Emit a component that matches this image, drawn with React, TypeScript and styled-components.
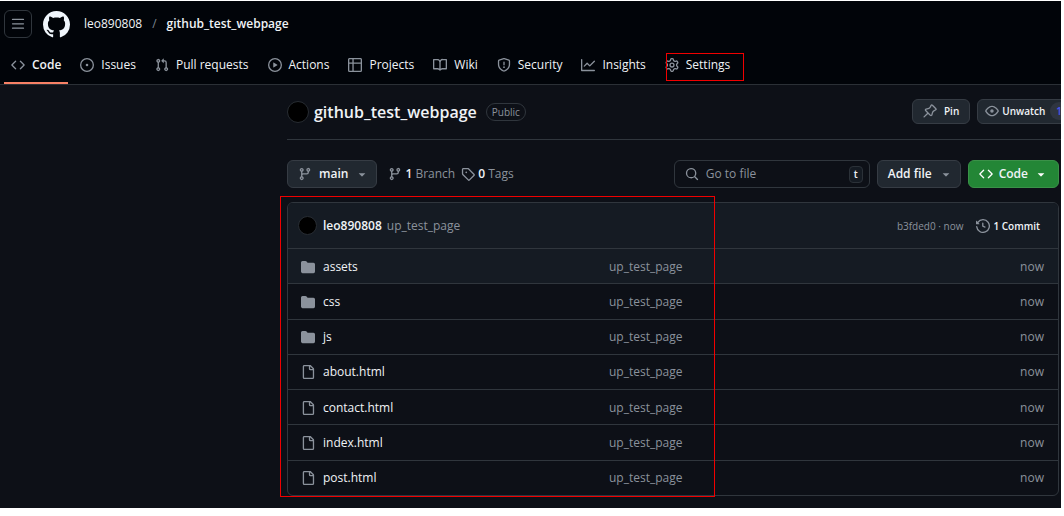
import React from "react";
import styled, { createGlobalStyle, css } from "styled-components";

const PATHS = {
  code: "m11.28 3.22 4.25 4.25a.75.75 0 0 1 0 1.06l-4.25 4.25a.749.749 0 0 1-1.275-.326.749.749 0 0 1 .215-.734L13.94 8l-3.72-3.72a.749.749 0 0 1 .326-1.275.749.749 0 0 1 .734.215Zm-6.56 0a.751.751 0 0 1 1.042.018.751.751 0 0 1 .018 1.042L2.06 8l3.72 3.72a.749.749 0 0 1-.326 1.275.749.749 0 0 1-.734-.215L.47 8.53a.75.75 0 0 1 0-1.06Z",
  issue: "M8 9.5a1.5 1.5 0 1 0 0-3 1.5 1.5 0 0 0 0 3ZM8 0a8 8 0 1 1 0 16A8 8 0 0 1 8 0ZM1.5 8a6.5 6.5 0 1 0 13 0 6.5 6.5 0 0 0-13 0Z",
  pull: "M1.5 3.25a2.25 2.25 0 1 1 3 2.122v5.256a2.251 2.251 0 1 1-1.5 0V5.372A2.25 2.25 0 0 1 1.5 3.25Zm5.677-.177L9.573.677A.25.25 0 0 1 10 .854V2.5h1A2.5 2.5 0 0 1 13.5 5v5.628a2.251 2.251 0 1 1-1.5 0V5a1 1 0 0 0-1-1h-1v1.646a.25.25 0 0 1-.427.177L7.177 3.427a.25.25 0 0 1 0-.354ZM3.75 2.5a.75.75 0 1 0 0 1.5.75.75 0 0 0 0-1.5Zm0 9.5a.75.75 0 1 0 0 1.5.75.75 0 0 0 0-1.5Zm8.25.75a.75.75 0 1 0 1.5 0 .75.75 0 0 0-1.5 0Z",
  play: "M8 0a8 8 0 1 1 0 16A8 8 0 0 1 8 0ZM1.5 8a6.5 6.5 0 1 0 13 0 6.5 6.5 0 0 0-13 0Zm4.879-2.773 4.264 2.559a.25.25 0 0 1 0 .428l-4.264 2.559A.25.25 0 0 1 6 10.559V5.442a.25.25 0 0 1 .379-.215Z",
  table: "M0 1.75C0 .784.784 0 1.75 0h12.5C15.216 0 16 .784 16 1.75v12.5A1.75 1.75 0 0 1 14.25 16H1.75A1.75 1.75 0 0 1 0 14.25ZM6.5 6.5v8h7.75a.25.25 0 0 0 .25-.25V6.5Zm8-1.5V1.75a.25.25 0 0 0-.25-.25H6.5V5Zm-13 1.5v7.75c0 .138.112.25.25.25H5v-8ZM5 5V1.5H1.75a.25.25 0 0 0-.25.25V5Z",
  book: "M0 1.75A.75.75 0 0 1 .75 1h4.253c1.227 0 2.317.59 3 1.501A3.743 3.743 0 0 1 11.006 1h4.245a.75.75 0 0 1 .75.75v10.5a.75.75 0 0 1-.75.75h-4.507a2.25 2.25 0 0 0-1.591.659l-.622.621a.75.75 0 0 1-1.06 0l-.622-.621A2.25 2.25 0 0 0 5.258 13H.75a.75.75 0 0 1-.75-.75Zm7.251 10.324.004-5.073-.002-2.253A2.25 2.25 0 0 0 5.003 2.5H1.5v9h3.757a3.75 3.75 0 0 1 1.994.574ZM8.755 4.75l-.004 7.322a3.752 3.752 0 0 1 1.992-.572H14.5v-9h-3.495a2.25 2.25 0 0 0-2.25 2.25Z",
  shield: "M7.467.133a1.748 1.748 0 0 1 1.066 0l5.25 1.68A1.75 1.75 0 0 1 15 3.48V7c0 1.566-.32 3.182-1.303 4.682-.983 1.498-2.585 2.813-5.032 3.855a1.697 1.697 0 0 1-1.33 0c-2.447-1.042-4.049-2.357-5.032-3.855C1.32 10.182 1 8.566 1 7V3.48a1.75 1.75 0 0 1 1.217-1.667Zm.61 1.429a.25.25 0 0 0-.153 0l-5.25 1.68a.25.25 0 0 0-.174.238V7c0 1.358.275 2.666 1.057 3.86.784 1.194 2.121 2.34 4.366 3.297a.196.196 0 0 0 .154 0c2.245-.956 3.582-2.104 4.366-3.298C13.225 9.666 13.5 8.36 13.5 7V3.48a.251.251 0 0 0-.174-.237l-5.25-1.68ZM8.75 4.75v3a.75.75 0 0 1-1.5 0v-3a.75.75 0 0 1 1.5 0ZM9 10.5a1 1 0 1 1-2 0 1 1 0 0 1 2 0Z",
  graph: "M1.5 1.75V13.5h13.75a.75.75 0 0 1 0 1.5H.75a.75.75 0 0 1-.75-.75V1.75a.75.75 0 0 1 1.5 0Zm14.28 2.53-5.25 5.25a.75.75 0 0 1-1.06 0L7 7.06 4.28 9.78a.751.751 0 0 1-1.042-.018.751.751 0 0 1-.018-1.042l3.25-3.25a.75.75 0 0 1 1.06 0L10 7.94l4.72-4.72a.751.751 0 0 1 1.042.018.751.751 0 0 1 .018 1.042Z",
  gear: "M8 0a8.2 8.2 0 0 1 .701.031C9.444.095 9.99.645 10.16 1.29l.288 1.107c.018.066.079.158.212.224.231.114.454.243.668.386.123.082.233.09.299.071l1.103-.303c.644-.176 1.392.021 1.82.63.27.385.506.792.704 1.218.315.675.111 1.422-.364 1.891l-.814.806c-.049.048-.098.147-.088.294.016.257.016.515 0 .772-.01.147.038.246.088.294l.814.806c.475.469.679 1.216.364 1.891a7.977 7.977 0 0 1-.704 1.217c-.428.61-1.176.807-1.82.63l-1.102-.302c-.067-.019-.177-.011-.3.071a5.909 5.909 0 0 1-.668.386c-.133.066-.194.158-.211.224l-.29 1.106c-.168.646-.715 1.196-1.458 1.26a8.006 8.006 0 0 1-1.402 0c-.743-.064-1.289-.614-1.458-1.26l-.289-1.106c-.018-.066-.079-.158-.212-.224a5.738 5.738 0 0 1-.668-.386c-.123-.082-.233-.09-.299-.071l-1.103.303c-.644.176-1.392-.021-1.82-.63a8.12 8.12 0 0 1-.704-1.218c-.315-.675-.111-1.422.363-1.891l.815-.806c.05-.048.098-.147.088-.294a6.214 6.214 0 0 1 0-.772c.01-.147-.038-.246-.088-.294l-.815-.806C.635 6.045.431 5.298.746 4.623a7.92 7.92 0 0 1 .704-1.217c.428-.61 1.176-.807 1.82-.63l1.102.302c.067.019.177.011.3-.071.214-.143.437-.272.668-.386.133-.066.194-.158.211-.224l.29-1.106C6.009.645 6.556.095 7.299.03 7.53.01 7.764 0 8 0Zm-.571 1.525c-.036.003-.108.036-.137.146l-.289 1.105c-.147.561-.549.967-.998 1.189-.173.086-.34.183-.5.29-.417.278-.97.423-1.529.27l-1.103-.303c-.109-.03-.175.016-.195.045-.22.312-.412.644-.573.99-.014.031-.021.11.059.19l.815.806c.411.406.562.957.53 1.456a4.709 4.709 0 0 0 0 .582c.032.499-.119 1.05-.53 1.456l-.815.806c-.081.08-.073.159-.059.19.162.346.353.677.573.989.02.03.085.076.195.046l1.102-.303c.56-.153 1.113-.008 1.53.27.161.107.328.204.501.29.447.222.85.629.997 1.189l.289 1.105c.029.109.101.143.137.146a6.6 6.6 0 0 0 1.142 0c.036-.003.108-.036.137-.146l.289-1.105c.147-.561.549-.967.998-1.189.173-.086.34-.183.5-.29.417-.278.97-.423 1.529-.27l1.103.303c.109.029.175-.016.195-.045.22-.313.411-.644.573-.99.014-.031.021-.11-.059-.19l-.815-.806c-.411-.406-.562-.957-.53-1.456a4.709 4.709 0 0 0 0-.582c-.032-.499.119-1.05.53-1.456l.815-.806c.081-.08.073-.159.059-.19a6.464 6.464 0 0 0-.573-.989c-.02-.03-.085-.076-.195-.046l-1.102.303c-.56.153-1.113.008-1.53-.27a4.44 4.44 0 0 0-.501-.29c-.447-.222-.85-.629-.997-1.189l-.289-1.105c-.029-.11-.101-.143-.137-.146a6.6 6.6 0 0 0-1.142 0ZM11 8a3 3 0 1 1-6 0 3 3 0 0 1 6 0ZM9.5 8a1.5 1.5 0 1 0-3.001.001A1.5 1.5 0 0 0 9.5 8Z",
  branch: "M9.5 3.25a2.25 2.25 0 1 1 3 2.122V6A2.5 2.5 0 0 1 10 8.5H6a1 1 0 0 0-1 1v1.128a2.251 2.251 0 1 1-1.5 0V5.372a2.25 2.25 0 1 1 1.5 0v1.836A2.493 2.493 0 0 1 6 7h4a1 1 0 0 0 1-1v-.628A2.25 2.25 0 0 1 9.5 3.25Zm-6 0a.75.75 0 1 0 1.5 0 .75.75 0 0 0-1.5 0Zm8.25-.75a.75.75 0 1 0 0 1.5.75.75 0 0 0 0-1.5ZM4.25 12a.75.75 0 1 0 0 1.5.75.75 0 0 0 0-1.5Z",
  tag: "M1 7.775V2.75C1 1.784 1.784 1 2.75 1h5.025c.464 0 .91.184 1.238.513l6.25 6.25a1.75 1.75 0 0 1 0 2.474l-5.026 5.026a1.75 1.75 0 0 1-2.474 0l-6.25-6.25A1.752 1.752 0 0 1 1 7.775Zm1.5 0c0 .066.026.13.073.177l6.25 6.25a.25.25 0 0 0 .354 0l5.025-5.025a.25.25 0 0 0 0-.354l-6.25-6.25a.25.25 0 0 0-.177-.073H2.75a.25.25 0 0 0-.25.25ZM6 5a1 1 0 1 1 0 2 1 1 0 0 1 0-2Z",
  search: "M10.68 11.74a6 6 0 0 1-7.922-8.982 6 6 0 0 1 8.982 7.922l3.04 3.04a.749.749 0 0 1-.326 1.275.749.749 0 0 1-.734-.215ZM11.5 7a4.499 4.499 0 1 0-8.997 0A4.499 4.499 0 0 0 11.5 7Z",
  history: "m.427 1.927 1.215 1.215a8.002 8.002 0 1 1-1.6 5.685.75.75 0 1 1 1.493-.154 6.5 6.5 0 1 0 1.18-4.458l1.358 1.358A.25.25 0 0 1 3.896 6H.25A.25.25 0 0 1 0 5.75V2.104a.25.25 0 0 1 .427-.177ZM7.75 4a.75.75 0 0 1 .75.75v2.992l2.028.812a.75.75 0 0 1-.557 1.392l-2.5-1A.751.751 0 0 1 7 8.25v-3.5A.75.75 0 0 1 7.75 4Z",
  file: "M2 1.75C2 .784 2.784 0 3.75 0h6.586c.464 0 .909.184 1.237.513l2.914 2.914c.329.328.513.773.513 1.237v9.586A1.75 1.75 0 0 1 13.25 16h-9.5A1.75 1.75 0 0 1 2 14.25Zm1.75-.25a.25.25 0 0 0-.25.25v12.5c0 .138.112.25.25.25h9.5a.25.25 0 0 0 .25-.25V6h-2.75A1.75 1.75 0 0 1 9 4.25V1.5Zm6.75.062V4.25c0 .138.112.25.25.25h2.688l-.011-.013-2.914-2.914-.013-.011Z",
  folder: "M1.75 1A1.75 1.75 0 0 0 0 2.75v10.5C0 14.216.784 15 1.75 15h12.5A1.75 1.75 0 0 0 16 13.25v-8.5A1.75 1.75 0 0 0 14.25 3H7.5a.25.25 0 0 1-.2-.1l-.9-1.2C6.07 1.26 5.55 1 5 1H1.75Z",
  caret: "m4.427 7.427 3.396 3.396a.25.25 0 0 0 .354 0l3.396-3.396A.25.25 0 0 0 11.396 7H4.604a.25.25 0 0 0-.177.427Z",
  pin: "m11.294.984 3.722 3.722a1.75 1.75 0 0 1-.504 2.826l-1.327.613a3.089 3.089 0 0 0-1.707 2.084l-.584 2.454c-.317 1.332-1.972 1.8-2.94.832L5.75 11.311 1.78 15.28a.749.749 0 1 1-1.06-1.06l3.969-3.97-2.204-2.204c-.968-.968-.5-2.623.832-2.94l2.454-.584a3.08 3.08 0 0 0 2.084-1.707l.613-1.327a1.75 1.75 0 0 1 2.826-.504ZM6.283 9.723l2.732 2.731a.25.25 0 0 0 .42-.119l.584-2.454a4.586 4.586 0 0 1 2.537-3.098l1.328-.613a.25.25 0 0 0 .072-.404l-3.722-3.722a.25.25 0 0 0-.404.072l-.613 1.328a4.584 4.584 0 0 1-3.098 2.537l-2.454.584a.25.25 0 0 0-.119.42l2.731 2.732Z",
  eye: "M8 2c1.981 0 3.671.992 4.933 2.078 1.27 1.091 2.187 2.345 2.637 3.023a1.62 1.62 0 0 1 0 1.798c-.45.678-1.367 1.932-2.637 3.023C11.67 13.008 9.981 14 8 14c-1.981 0-3.671-.992-4.933-2.078C1.797 10.83.88 9.576.43 8.898a1.62 1.62 0 0 1 0-1.798c.45-.677 1.367-1.931 2.637-3.022C4.33 2.992 6.019 2 8 2ZM1.679 7.932a.12.12 0 0 0 0 .136c.411.622 1.241 1.75 2.366 2.717C5.176 11.758 6.527 12.5 8 12.5c1.473 0 2.825-.742 3.955-1.715 1.124-.967 1.954-2.096 2.366-2.717a.12.12 0 0 0 0-.136c-.412-.621-1.242-1.75-2.366-2.717C10.824 4.242 9.473 3.5 8 3.5c-1.473 0-2.825.742-3.955 1.715-1.124.967-1.954 2.096-2.366 2.717ZM8 10a2 2 0 1 1-.001-3.999A2 2 0 0 1 8 10Z",
  bars: "M1 2.75A.75.75 0 0 1 1.75 2h12.5a.75.75 0 0 1 0 1.5H1.75A.75.75 0 0 1 1 2.75Zm0 5A.75.75 0 0 1 1.75 7h12.5a.75.75 0 0 1 0 1.5H1.75A.75.75 0 0 1 1 7.75ZM1.75 12h12.5a.75.75 0 0 1 0 1.5H1.75a.75.75 0 0 1 0-1.5Z",
  github: "M8 0c4.42 0 8 3.58 8 8a8.013 8.013 0 0 1-5.45 7.59c-.4.08-.55-.17-.55-.38 0-.27.01-1.13.01-2.2 0-.75-.25-1.23-.54-1.48 1.78-.2 3.65-.88 3.65-3.95 0-.88-.31-1.59-.82-2.15.08-.2.36-1.02-.08-2.12 0 0-.67-.22-2.2.82-.64-.18-1.32-.27-2-.27-.68 0-1.36.09-2 .27-1.53-1.03-2.2-.82-2.2-.82-.44 1.1-.16 1.92-.08 2.12-.51.56-.82 1.28-.82 2.15 0 3.06 1.86 3.75 3.64 3.95-.23.2-.44.55-.51 1.07-.46.21-1.61.55-2.33-.66-.15-.24-.6-.83-1.23-.82-.67.01-.27.38.01.53.34.19.73.9.82 1.13.16.45.68 1.31 2.69.94 0 .67.01 1.3.01 1.49 0 .21-.15.45-.55.38A7.995 7.995 0 0 1 0 8c0-4.42 3.58-8 8-8Z",
};

type IconName = keyof typeof PATHS;

const Svg = styled.svg<{ $color: string }>`
  display: block;
  flex: none;
  fill: ${(p) => p.$color};
`;

const Icon = ({ name, size = 14, color = "#8b929c" }: { name: IconName; size?: number; color?: string }) => (
  <Svg viewBox="0 0 16 16" width={size} height={size} $color={color} aria-hidden="true">
    <path fillRule="evenodd" d={PATHS[name]} />
  </Svg>
);

const GlobalStyle = createGlobalStyle`
  * { box-sizing: border-box; }
  body {
    margin: 0;
    background: #fff;
    color: #f0f3f6;
    font: 12px/18px "Open Sans", "Noto Sans", sans-serif;
  }
  a { color: inherit; text-decoration: none; }
  button, input { font: inherit; color: inherit; }
`;

const Page = styled.div`
  margin: 1px 3px 8px 0;
  min-height: calc(100vh - 9px);
  background: #0d1017;
  overflow: hidden;
`;

const Header = styled.header`
  background: #010409;
  border-bottom: 1px solid #2b3036;
`;

const TopBar = styled.div`
  display: flex;
  align-items: center;
  padding: 9px 4px 0;
`;

const MenuButton = styled.button`
  display: flex;
  align-items: center;
  justify-content: center;
  width: 28px;
  height: 28px;
  margin-right: 11px;
  padding: 0;
  background: transparent;
  border: 1px solid #30363d;
  border-radius: 6px;
`;

const Crumbs = styled.nav`
  display: flex;
  gap: 10px;
  margin-left: 14px;
`;

const Slash = styled.span`
  color: #7d858f;
`;

const RepoCrumb = styled.a`
  font-weight: 600;
`;

const Tabs = styled.nav`
  display: flex;
  gap: 5px;
  padding: 13px 4px 0;
`;

const Tab = styled.a<{ $active?: boolean }>`
  position: relative;
  display: flex;
  align-items: center;
  gap: 7px;
  height: 33px;
  padding: 0 7px 5px;
  white-space: nowrap;
  ${(p) =>
    p.$active &&
    css`
      font-weight: 600;
      box-shadow: inset 0 -2px #f78166;
    `}
`;

const Highlight = styled.span`
  position: absolute;
  border: 1px solid #f00000;
  pointer-events: none;
`;

const TabHighlight = styled(Highlight)`
  inset: 2px -7px 3px 8px;
`;

const FilesHighlight = styled(Highlight)`
  top: -7px;
  bottom: -2px;
  left: -8px;
  width: 435px;
`;

const Main = styled.main`
  margin-left: 287px;
`;

const TitleRow = styled.div`
  display: flex;
  align-items: center;
  height: 55px;
  border-bottom: 1px solid #30363d;
`;

const Avatar = styled.span<{ $size: number }>`
  flex: none;
  width: ${(p) => p.$size}px;
  height: ${(p) => p.$size}px;
  border: 1px solid #272c32;
  border-radius: 50%;
  background: #000;
`;

const Title = styled.h1`
  margin: 0 9px 0 5px;
  font-size: 16px;
  line-height: 24px;
  font-weight: 600;
`;

const Badge = styled.span`
  padding: 0 5px;
  border: 1px solid #30363d;
  border-radius: 9px;
  color: #8b929c;
  font-size: 10px;
  line-height: 16px;
  font-weight: 500;
`;

const Actions = styled.div`
  display: flex;
  gap: 7px;
  flex: none;
  margin: 0 -15px 2px auto;
`;

const Button = styled.button<{ $primary?: boolean }>`
  display: flex;
  align-items: center;
  flex: none;
  gap: ${(p) => (p.$primary ? 6 : 7)}px;
  height: 28px;
  padding: 0 ${(p) => (p.$primary ? 10 : 7)}px 0 10px;
  border: 1px solid ${(p) => (p.$primary ? "#3a9148" : "#363c44")};
  border-radius: 6px;
  background: ${(p) => (p.$primary ? "#238636" : "#212830")};
  font-weight: 600;
  white-space: nowrap;
`;

const SmallButton = styled(Button)<{ $tight?: boolean }>`
  gap: ${(p) => (p.$tight ? 3 : 7)}px;
  height: 25px;
  padding: 0 ${(p) => (p.$tight ? 7 : 10)}px;
  font-size: 10px;
`;

const Counter = styled.span`
  margin-left: 2px;
  padding: 0 6px;
  border-radius: 9px;
  background: #2f3540;
  color: #4a56f0;
`;

const Toolbar = styled.div`
  display: flex;
  align-items: center;
  gap: 7px;
  margin: 20px 2px 14px 0;
`;

const Stat = styled.a`
  display: flex;
  align-items: center;
  gap: 3px;
  color: #8b929c;
  font-weight: 500;
  b {
    color: #f0f3f6;
    font-weight: 600;
  }
`;

const Stats = styled.div`
  display: flex;
  gap: 6px;
  margin: 0 auto 0 4px;
`;

const Search = styled.label`
  display: flex;
  align-items: center;
  gap: 7px;
  width: 196px;
  height: 28px;
  padding: 0 6px 0 10px;
  border: 1px solid #30363d;
  border-radius: 6px;
  input {
    flex: 1;
    min-width: 0;
    padding: 0;
    border: 0;
    outline: 0;
    background: transparent;
  }
  input::placeholder {
    color: #8b929c;
    opacity: 1;
  }
`;

const Key = styled.kbd`
  width: 14px;
  border: 1px solid #2b3138;
  border-radius: 4px;
  background: #151b23;
  font: 600 10px/15px "Open Sans", "Noto Sans", sans-serif;
  text-align: center;
`;

const Files = styled.section`
  position: relative;
  margin: 0 2px 12px 0;
  border: 1px solid #30363d;
  border-radius: 6px;
`;

const Commit = styled.div`
  display: flex;
  align-items: center;
  height: 45px;
  padding: 0 18px 0 10px;
  border-radius: 5px 5px 0 0;
  background: #151b23;
`;

const Author = styled.a`
  margin: 0 5px 0 6px;
  font-weight: 600;
`;

const Muted = styled.span<{ $small?: boolean }>`
  color: #8b929c;
  font-size: ${(p) => (p.$small ? 10 : 12)}px;
`;

const CommitMeta = styled.div`
  display: flex;
  align-items: center;
  gap: 13px;
  margin-left: auto;
`;

const Commits = styled.a`
  display: flex;
  align-items: center;
  gap: 3px;
  font-size: 10px;
  font-weight: 600;
`;

const FileTable = styled.table`
  width: 100%;
  height: 247px;
  border-collapse: separate;
  border-spacing: 0;
  table-layout: fixed;
`;

const Row = styled.tr<{ $hover?: boolean }>`
  background: ${(p) => (p.$hover ? "#151b23" : "transparent")};
`;

const Cell = styled.td`
  padding: 1px 14px 0 0;
  border-top: 1px solid #30363d;
  color: #8b929c;
  &:last-child {
    text-align: right;
  }
`;

const NameCell = styled(Cell)`
  width: 321px;
  padding-left: 13px;
  a {
    display: flex;
    align-items: center;
    gap: 8px;
    color: #f0f3f6;
  }
`;

const tabs: { icon: IconName; label: string }[] = [
  { icon: "code", label: "Code" },
  { icon: "issue", label: "Issues" },
  { icon: "pull", label: "Pull requests" },
  { icon: "play", label: "Actions" },
  { icon: "table", label: "Projects" },
  { icon: "book", label: "Wiki" },
  { icon: "shield", label: "Security" },
  { icon: "graph", label: "Insights" },
  { icon: "gear", label: "Settings" },
];

const files = ["assets", "css", "js", "about.html", "contact.html", "index.html", "post.html"];

export default function App() {
  return (
    <Page>
      <GlobalStyle />
      <Header>
        <TopBar>
          <MenuButton aria-label="Open menu"><Icon name="bars" /></MenuButton>
          <a href="#home" aria-label="Homepage"><Icon name="github" size={27} color="#f0f6fc" /></a>
          <Crumbs aria-label="Breadcrumb">
            <a href="#owner">leo890808</a>
            <Slash>/</Slash>
            <RepoCrumb href="#repo">github_test_webpage</RepoCrumb>
          </Crumbs>
        </TopBar>
        <Tabs aria-label="Repository">
          {tabs.map((t, i) => (
            <Tab key={t.label} href={`#${t.icon}`} $active={i === 0}>
              <Icon name={t.icon} />
              {t.label}
              {t.label === "Settings" && <TabHighlight />}
            </Tab>
          ))}
        </Tabs>
      </Header>
      <Main>
        <TitleRow>
          <Avatar $size={22} />
          <Title>github_test_webpage</Title>
          <Badge>Public</Badge>
          <Actions>
            <SmallButton><Icon name="pin" />Pin</SmallButton>
            <SmallButton $tight><Icon name="eye" />Unwatch<Counter>1</Counter></SmallButton>
          </Actions>
        </TitleRow>
        <Toolbar>
          <Button><Icon name="branch" />main<Icon name="caret" /></Button>
          <Stats>
            <Stat href="#branches"><Icon name="branch" /><span><b>1</b> Branch</span></Stat>
            <Stat href="#tags"><Icon name="tag" /><span><b>0</b> Tags</span></Stat>
          </Stats>
          <Search>
            <Icon name="search" />
            <input type="text" placeholder="Go to file" aria-label="Go to file" />
            <Key>t</Key>
          </Search>
          <Button>Add file<Icon name="caret" /></Button>
          <Button $primary><Icon name="code" color="#fff" />Code<Icon name="caret" color="#fff" /></Button>
        </Toolbar>
        <Files>
          <Commit>
            <Avatar $size={19} />
            <Author href="#author">leo890808</Author>
            <Muted>up_test_page</Muted>
            <CommitMeta>
              <Muted $small>b3fded0 · now</Muted>
              <Commits href="#commits"><Icon name="history" />1 Commit</Commits>
            </CommitMeta>
          </Commit>
          <FileTable>
            <tbody>
              {files.map((f, i) => (
                <Row key={f} $hover={i === 0}>
                  <NameCell>
                    <a href={`#${f}`}><Icon name={i < 3 ? "folder" : "file"} />{f}</a>
                  </NameCell>
                  <Cell>up_test_page</Cell>
                  <Cell>now</Cell>
                </Row>
              ))}
            </tbody>
          </FileTable>
          <FilesHighlight />
        </Files>
      </Main>
    </Page>
  );
}
